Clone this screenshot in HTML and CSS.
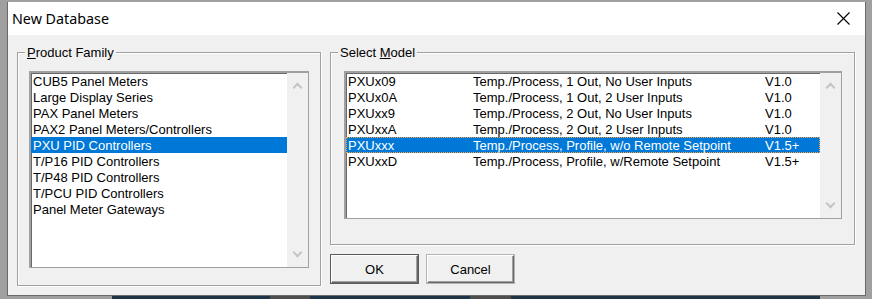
FILE: index.html
```html
<!DOCTYPE html>
<html lang="en">
<head>
    <meta charset="UTF-8">
    <title>New Database</title>
    <link rel="stylesheet" href="styles.css">
</head>
<body>
<div class="window">
    <div class="titlebar">
        <span class="title">New Database</span>
        <span class="close">
            <svg width="13" height="13" viewBox="0 0 13 13"><path d="M0.5 0.5 L12.5 12.5 M12.5 0.5 L0.5 12.5" stroke="#000" stroke-width="1.1" fill="none"/></svg>
        </span>
    </div>

    <div class="dialog">
        <div class="group family">
            <div class="group-label"><u>P</u>roduct Family</div>
            <div class="listbox family-list">
                <div class="rows">
                    <div class="row">CUB5 Panel Meters</div>
                    <div class="row">Large Display Series</div>
                    <div class="row">PAX Panel Meters</div>
                    <div class="row">PAX2 Panel Meters/Controllers</div>
                    <div class="row selected">PXU PID Controllers</div>
                    <div class="row">T/P16 PID Controllers</div>
                    <div class="row">T/P48 PID Controllers</div>
                    <div class="row">T/PCU PID Controllers</div>
                    <div class="row">Panel Meter Gateways</div>
                </div>
                <div class="scrollbar">
                    <span class="arrow up"></span>
                    <span class="arrow down"></span>
                </div>
            </div>
        </div>

        <div class="right-col">
            <div class="group model">
                <div class="group-label">Select <u>M</u>odel</div>
                <div class="listbox model-list">
                    <div class="rows">
                        <div class="row"><span class="c-name">PXUx09</span><span class="c-desc">Temp./Process, 1 Out, No User Inputs</span><span class="c-ver">V1.0</span></div>
                        <div class="row"><span class="c-name">PXUx0A</span><span class="c-desc">Temp./Process, 1 Out, 2 User Inputs</span><span class="c-ver">V1.0</span></div>
                        <div class="row"><span class="c-name">PXUxx9</span><span class="c-desc">Temp./Process, 2 Out, No User Inputs</span><span class="c-ver">V1.0</span></div>
                        <div class="row"><span class="c-name">PXUxxA</span><span class="c-desc">Temp./Process, 2 Out, 2 User Inputs</span><span class="c-ver">V1.0</span></div>
                        <div class="row selected focused"><span class="c-name">PXUxxx</span><span class="c-desc">Temp./Process, Profile, w/o Remote Setpoint</span><span class="c-ver">V1.5+</span></div>
                        <div class="row"><span class="c-name">PXUxxD</span><span class="c-desc">Temp./Process, Profile, w/Remote Setpoint</span><span class="c-ver">V1.5+</span></div>
                    </div>
                    <div class="scrollbar">
                        <span class="arrow up"></span>
                        <span class="arrow down"></span>
                    </div>
                </div>
            </div>

            <div class="buttons">
                <button class="btn default">OK</button>
                <button class="btn">Cancel</button>
            </div>
        </div>
    </div>
</div>
<div class="desktop-strip">
    <span class="seg gap"></span>
    <span class="seg dark" style="width: 158px"></span>
    <span class="seg mid" style="width: 40px"></span>
    <span class="seg dark" style="width: 160px"></span>
    <span class="seg mid" style="width: 41px"></span>
    <span class="seg dark" style="width: 309px"></span>
</div>
</body>
</html>
```

FILE: styles.css
```css
* {
    margin: 0;
    padding: 0;
    box-sizing: border-box;
}

body {
    width: 872px;
    height: 299px;
    overflow: hidden;
    background: #a0a0a0;
    font-family: 'Liberation Sans', Arial, sans-serif;
    font-size: 13px;
    color: #000;
}

.window {
    margin: 2px 0 0 7px;
    width: 859px;
    height: 294px;
    border: 1px solid #6a6a6a;
    border-top: none;
    background: #f0f0f0;
    display: flex;
    flex-direction: column;
}

.titlebar {
    height: 33px;
    background: #fff;
    display: flex;
    align-items: center;
    justify-content: space-between;
    padding: 0 15px 0 4px;
}

.title {
    font-family: 'Noto Sans', 'Open Sans', sans-serif;
    font-size: 14.3px;
    color: #000;
}

.close svg {
    display: block;
}

.dialog {
    flex: 1;
    display: flex;
    gap: 9px;
    padding: 17px 10px 0 9px;
}

/* etched group box */
.group {
    border: 1px solid #a0a0a0;
    box-shadow: inset 1px 1px 0 #fff, 1px 1px 0 #fff;
    display: flex;
    flex-direction: column;
}

.group-label {
    align-self: flex-start;
    margin: -9px 0 0 7px;
    padding: 0 2px;
    line-height: 17px;
    background: #f0f0f0;
    position: relative;
}

.family {
    width: 305px;
    height: 234px;
}

.model {
    width: 525px;
    height: 193px;
}

.right-col {
    display: flex;
    flex-direction: column;
}

/* sunken list box */
.listbox {
    display: flex;
    background: #fff;
    border-top: 2px solid #a0a0a0;
    border-left: 2px solid #a0a0a0;
    border-right: 1px solid #a0a0a0;
    border-bottom: 1px solid #a0a0a0;
    box-shadow: inset 1px 1px 0 #696969;
}

.family-list {
    margin: 10px 11px 0 11px;
    height: 197px;
}

.model-list {
    margin: 10px 12px 0 13px;
    height: 148px;
}

.rows {
    flex: 1;
}

.row {
    height: 16px;
    line-height: 17px;
    padding-left: 2px;
    white-space: nowrap;
    overflow: hidden;
    display: flex;
}

.row.selected {
    background: #0078d7;
    color: #fff;
}

.row.focused {
    outline: 1px dotted #f5a245;
    outline-offset: -1px;
}

.c-name {
    width: 125px;
}

.c-desc {
    width: 292px;
}

.scrollbar {
    width: 21px;
    background: #f0f0f0;
    display: flex;
    flex-direction: column;
    justify-content: space-between;
    align-items: center;
    padding: 8px 0 8px;
}

.arrow {
    width: 7px;
    height: 7px;
    border-left: 2px solid #c4c4c4;
    border-top: 2px solid #c4c4c4;
}

.arrow.up {
    transform: translateY(3px) rotate(45deg);
}

.arrow.down {
    transform: translateY(-3px) rotate(225deg);
}

.buttons {
    display: flex;
    gap: 9px;
    margin: 10px 0 0 1px;
}

.btn {
    width: 87px;
    height: 28px;
    font-family: 'Liberation Sans', Arial, sans-serif;
    font-size: 13px;
    color: #000;
    background: #f0f0f0;
    border-top: 1px solid #fff;
    border-left: 1px solid #fff;
    border-right: 1px solid #696969;
    border-bottom: 1px solid #696969;
    box-shadow: inset -1px -1px 0 #a0a0a0, 0 0 0 1px #b4b4b4;
}

.btn.default {
    box-shadow: inset -1px -1px 0 #a0a0a0, 0 0 0 1px #5a5a5a;
}

.desktop-strip {
    display: flex;
    height: 3px;
}

.seg.gap {
    width: 112px;
}

.seg.dark {
    background: #1f3447;
}

.seg.mid {
    background: #4e4e4e;
}
```
